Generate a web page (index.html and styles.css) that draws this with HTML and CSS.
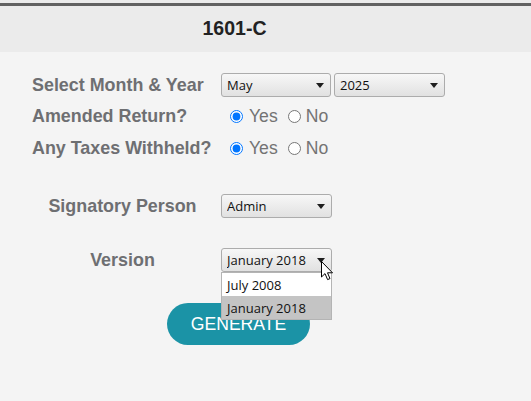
FILE: index.html
```html
<!DOCTYPE html>
<html lang="en">
<head>
    <meta charset="UTF-8">
    <title>1601-C</title>
    <link rel="stylesheet" href="styles.css">
</head>
<body>
<div id="page-top">
    <div id="form-title-bar">
        <label class="form-title">1601-C</label>
    </div>
</div>
<div id="form-body">
    <div class="row first">
        <label class="row-label">Select Month &amp; Year</label>
        <span class="select-wrap">
            <select class="pick">
                <option selected>May</option>
            </select>
        </span>
        <span class="select-wrap gap-left">
            <select class="pick">
                <option selected>2025</option>
            </select>
        </span>
    </div>
    <div class="row">
        <label class="row-label">Amended Return?</label>
        <span class="radio-group">
            <input type="radio" name="amended" id="amended-yes" checked>
            <label for="amended-yes" class="radio-text">Yes</label>
            <input type="radio" name="amended" id="amended-no" class="second">
            <label for="amended-no" class="radio-text">No</label>
        </span>
    </div>
    <div class="row third">
        <label class="row-label">Any Taxes Withheld?</label>
        <span class="radio-group">
            <input type="radio" name="withheld" id="withheld-yes" checked>
            <label for="withheld-yes" class="radio-text">Yes</label>
            <input type="radio" name="withheld" id="withheld-no" class="second">
            <label for="withheld-no" class="radio-text">No</label>
        </span>
    </div>
    <div class="row signatory">
        <label class="row-label centered">Signatory Person</label>
        <span class="select-wrap wide">
            <select class="pick">
                <option selected>Admin</option>
            </select>
        </span>
    </div>
    <div class="row version">
        <label class="row-label centered">Version</label>
        <span class="select-wrap wide">
            <select class="pick">
                <option>July 2008</option>
                <option selected>January 2018</option>
            </select>
            <!-- open list of the version select -->
            <div class="open-list">
                <div class="open-item">July 2008</div>
                <div class="open-item current">January 2018</div>
            </div>
            <svg class="mouse-pointer" width="13" height="20" viewBox="0 0 13 20">
                <path d="M0.5 0.5 L0.5 16 L4 12.6 L6.6 18.6 L9 17.6 L6.5 11.8 L11.5 11.8 Z"
                      fill="#ffffff" stroke="#000000" stroke-width="1" stroke-linejoin="round"/>
            </svg>
        </span>
    </div>
    <button class="generate-btn">GENERATE</button>
</div>
</body>
</html>
```

FILE: styles.css
```css
body {
    margin: 0;
    padding: 0;
    background: #f4f4f4;
    font-family: "Liberation Sans", Arial, sans-serif;
}
#page-top {
    background: #ebebeb;
    padding-top: 3px;
}
#form-title-bar {
    height: 46px;
    border-top: 3px solid #616161;
    background: #ebebeb;
    text-align: center;
    padding-right: 62px;
}
.form-title {
    display: inline-block;
    line-height: 44px;
    font-size: 19.5px;
    font-weight: bold;
    color: #222222;
}
#form-body {
    display: flex;
    flex-direction: column;
    align-items: flex-start;
    padding-left: 32px;
}
.row {
    display: flex;
    align-items: center;
    height: 24px;
    margin-top: 7px;
}
.row.first {
    margin-top: 21px;
}
.row.third {
    margin-top: 8px;
}
.row.signatory {
    margin-top: 34px;
}
.row.version {
    margin-top: 30px;
}
.row-label {
    width: 181px;
    margin-right: 8px;
    font-size: 17.9px;
    font-weight: bold;
    color: #6e6f72;
    white-space: nowrap;
}
.row-label.centered {
    text-align: center;
}
.select-wrap {
    position: relative;
    display: inline-block;
    width: 110px;
    height: 24px;
}
.select-wrap.wide {
    width: 111px;
}
.select-wrap.gap-left {
    width: 111px;
    margin-left: 3px;
}
.select-wrap::after {
    content: "";
    position: absolute;
    right: 7px;
    top: 10px;
    border-left: 4px solid transparent;
    border-right: 4px solid transparent;
    border-top: 5px solid #1e1e1e;
}
.pick {
    appearance: none;
    -webkit-appearance: none;
    box-sizing: border-box;
    width: 100%;
    height: 24px;
    margin: 0;
    padding: 0 0 0 5px;
    border: 1px solid #acacac;
    border-radius: 3px;
    background: linear-gradient(#f7f7f7, #e1e1e1);
    font-family: "Open Sans", "Noto Sans", sans-serif;
    font-size: 13px;
    color: #111111;
    outline: none;
}
.open-list {
    position: absolute;
    left: 0;
    top: 24px;
    width: 111px;
    box-sizing: border-box;
    border: 1px solid #b4b4b4;
    background: #ffffff;
    z-index: 5;
}
.open-item {
    height: 23px;
    line-height: 24px;
    padding-left: 5px;
    font-family: "Open Sans", "Noto Sans", sans-serif;
    font-size: 13px;
    color: #111111;
}
.open-item.current {
    background: #c4c4c4;
}
.mouse-pointer {
    position: absolute;
    left: 100px;
    top: 13px;
    z-index: 6;
}
.radio-group {
    display: flex;
    align-items: center;
    padding-left: 9px;
}
.radio-group input {
    width: 13px;
    height: 13px;
    margin: 0 6px 0 0;
    accent-color: #0075ff;
}
.radio-group input.second {
    margin-left: 10px;
    margin-right: 5px;
}
.radio-text {
    font-size: 17.6px;
    color: #737373;
}
.generate-btn {
    margin-top: 31px;
    margin-left: 135px;
    width: 143px;
    height: 42px;
    border: none;
    border-radius: 21px;
    background: #1b93a6;
    color: #ffffff;
    font-family: "Liberation Sans", Arial, sans-serif;
    font-size: 17.6px;
    padding: 0;
}
```
